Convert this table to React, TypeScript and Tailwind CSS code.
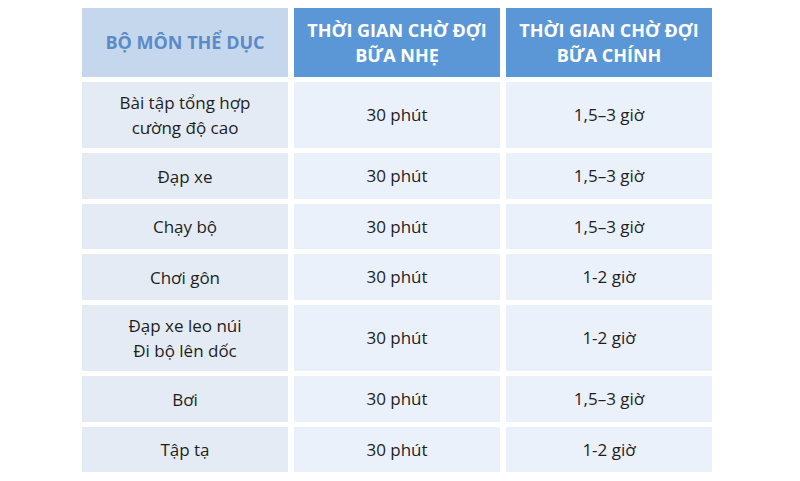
const rows: { sport: string[]; snack: string; meal: string; h: string }[] = [
  { sport: ["Bài tập tổng hợp", "cường độ cao"], snack: "30 phút", meal: "1,5–3 giờ", h: "h-[66px]" },
  { sport: ["Đạp xe"], snack: "30 phút", meal: "1,5–3 giờ", h: "h-[46px]" },
  { sport: ["Chạy bộ"], snack: "30 phút", meal: "1,5–3 giờ", h: "h-[45px]" },
  { sport: ["Chơi gôn"], snack: "30 phút", meal: "1-2 giờ", h: "h-[46px]" },
  { sport: ["Đạp xe leo núi", "Đi bộ lên dốc"], snack: "30 phút", meal: "1-2 giờ", h: "h-[66px]" },
  { sport: ["Bơi"], snack: "30 phút", meal: "1,5–3 giờ", h: "h-[46px]" },
  { sport: ["Tập tạ"], snack: "30 phút", meal: "1-2 giờ", h: "h-[45px]" },
];

export default function App() {
  return (
    <div className="w-[800px] h-[481px] bg-white pt-[8px] pl-[82px] font-['Open_Sans',sans-serif] text-[#1e1e1e]">
      <div className="grid grid-cols-[206px_206px_206px] gap-x-[6px] gap-y-[5px]">
        {/* Header */}
        <div className="h-[69px] bg-[#c5d7ec] flex items-center justify-center text-center text-[18px] font-bold text-[#5a8bc8]">
          BỘ MÔN THỂ DỤC
        </div>
        <div className="h-[69px] bg-[#5b97d6] flex items-center justify-center text-center text-[18px] leading-[25px] font-bold text-white">
          THỜI GIAN CHỜ ĐỢI
          <br />
          BỮA NHẸ
        </div>
        <div className="h-[69px] bg-[#5b97d6] flex items-center justify-center text-center text-[18px] leading-[25px] font-bold text-white">
          THỜI GIAN CHỜ ĐỢI
          <br />
          BỮA CHÍNH
        </div>

        {rows.map((r, i) => (
          <>
            <div
              key={`s${i}`}
              className={`${r.h} bg-[#e4ebf4] flex flex-col items-center justify-center text-center text-[17px] leading-[25px]`}
            >
              {r.sport.map((l) => (
                <span key={l}>{l}</span>
              ))}
            </div>
            <div key={`n${i}`} className={`${r.h} bg-[#eaf1fb] flex items-center justify-center text-[17px]`}>
              {r.snack}
            </div>
            <div key={`m${i}`} className={`${r.h} bg-[#eaf1fb] flex items-center justify-center text-[17px]`}>
              {r.meal}
            </div>
          </>
        ))}
      </div>
    </div>
  );
}
